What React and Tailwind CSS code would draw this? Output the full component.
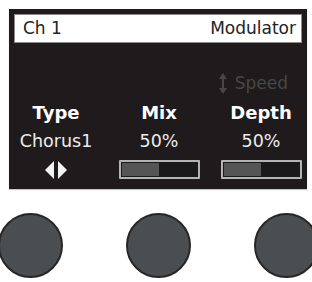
import React from "react";

const font = { fontFamily: '"DejaVu Sans", Verdana, sans-serif' };

const Bar = ({ value }) => (
  <div className="w-[81px] h-[19px] border-2 border-[#b4b4b4] bg-[#1a1a1a] p-[1px] rounded-[1px]">
    <div className="h-full bg-[#555555]" style={{ width: `${value}%` }} />
  </div>
);

const TypeArrows = () => (
  <svg width="24" height="18" viewBox="0 0 24 18" className="block">
    <polygon points="10,0 10,18 1,9" fill="#f2f2f2" />
    <polygon points="14,0 14,18 23,9" fill="#f2f2f2" />
  </svg>
);

const SpeedIcon = () => (
  <svg width="10" height="21" viewBox="0 0 10 21" className="block">
    <polygon points="5,0 9,6 1,6" fill="#474747" />
    <rect x="4" y="5" width="2" height="11" fill="#474747" />
    <polygon points="5,21 9,15 1,15" fill="#474747" />
  </svg>
);

const Knob = () => (
  <div className="w-[65px] h-[65px] shrink-0 rounded-full bg-[#4b4e50] border-2 border-[#262626]" />
);

export default function App() {
  const cols = [
    { title: "Type", value: "Chorus1", control: <TypeArrows /> },
    { title: "Mix", value: "50%", control: <Bar value={50} /> },
    { title: "Depth", value: "50%", control: <Bar value={50} /> },
  ];

  return (
    <div className="w-[312px] h-[282px] bg-white overflow-hidden pt-[9px]" style={font}>
      <div className="ml-[9px] w-[298px] h-[180px] bg-[#1f1b1c] px-[5px] pt-[5px] shadow-[0_1px_1px_#c8c8c8]">
        <div className="h-[29px] bg-white border border-[#8a8a8a] flex items-center justify-between pl-[8px] pr-[5px] text-[#232323] text-[17px] leading-none">
          <span>Ch 1</span>
          <span>Modulator</span>
        </div>

        <div className="mt-[29px] h-[22px] flex items-center justify-end gap-[7px] pr-[14px] text-[17px] text-[#474747] leading-[22px]">
          <SpeedIcon />
          <span>Speed</span>
        </div>

        <div className="mt-[8px] -mx-[5px] grid grid-cols-[94px_112px_92px]">
          {cols.map((c) => (
            <div key={c.title} className="flex flex-col items-center">
              <div className="h-[22px] leading-[22px] text-[18px] font-bold text-white">{c.title}</div>
              <div className="mt-[6px] h-[22px] leading-[22px] text-[17.5px] text-[#ececec]">{c.value}</div>
              <div className="mt-[8px] h-[19px] flex items-center">{c.control}</div>
            </div>
          ))}
        </div>
      </div>

      <div className="mt-[24px] -ml-[2px] flex gap-[63px]">
        <Knob />
        <Knob />
        <Knob />
      </div>
    </div>
  );
}
